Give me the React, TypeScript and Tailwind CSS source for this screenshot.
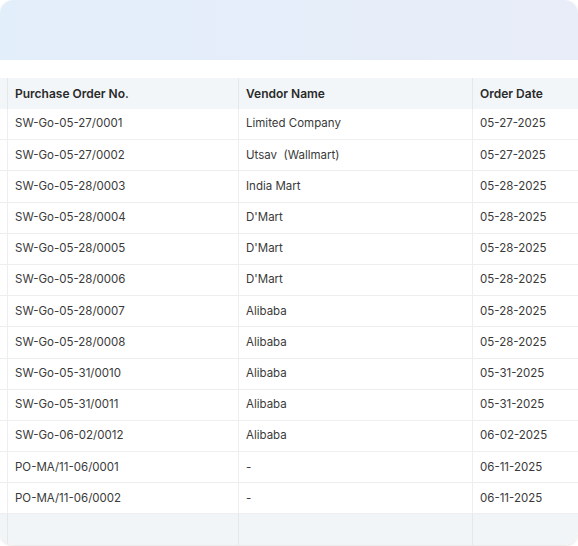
export default function App() {
  const rows: [string, string, string][] = [
    ["SW-Go-05-27/0001", "Limited Company", "05-27-2025"],
    ["SW-Go-05-27/0002", "Utsav  (Wallmart)", "05-27-2025"],
    ["SW-Go-05-28/0003", "India Mart", "05-28-2025"],
    ["SW-Go-05-28/0004", "D'Mart", "05-28-2025"],
    ["SW-Go-05-28/0005", "D'Mart", "05-28-2025"],
    ["SW-Go-05-28/0006", "D'Mart", "05-28-2025"],
    ["SW-Go-05-28/0007", "Alibaba", "05-28-2025"],
    ["SW-Go-05-28/0008", "Alibaba", "05-28-2025"],
    ["SW-Go-05-31/0010", "Alibaba", "05-31-2025"],
    ["SW-Go-05-31/0011", "Alibaba", "05-31-2025"],
    ["SW-Go-06-02/0012", "Alibaba", "06-02-2025"],
    ["PO-MA/11-06/0001", "-", "06-11-2025"],
    ["PO-MA/11-06/0002", "-", "06-11-2025"],
  ];
  const grid = "grid grid-cols-[8px_231px_234px_1fr]";
  return (
    <div className="w-[578px] h-[546px] bg-white" style={{ fontFamily: "Inter, 'Noto Sans', sans-serif" }}>
      <div className="w-[578px] h-[545px] rounded-[14px] overflow-hidden bg-white shadow-[0_1px_3px_rgba(0,0,0,0.12)]">
        <div className="h-[60px] bg-gradient-to-r from-[#e2eefa] to-[#e8edf9]" />
        <div className="h-[18px]" />
        <div className={`${grid} h-[31px] bg-[#f2f6f9] text-[12px] font-semibold text-[#2a2a2a]`}>
          <div className="border-r border-[#e5e8eb]" />
          <div className="border-r border-[#e5e8eb] flex items-center pl-[7px]">Purchase Order No.</div>
          <div className="border-r border-[#e5e8eb] flex items-center pl-[7px]">Vendor Name</div>
          <div className="flex items-center pl-[7px]">Order Date</div>
        </div>
        {rows.map((r, i) => (
          <div key={i} className={`${grid} h-[31.2px] text-[11.5px] text-[#3a3a3a] border-b border-[#eceef0]`}>
            <div className="border-r border-[#eceef0]" />
            <div className="border-r border-[#eceef0] flex items-center pl-[7px]">{r[0]}</div>
            <div className="border-r border-[#eceef0] flex items-center pl-[7px] whitespace-pre">{r[1]}</div>
            <div className="flex items-center pl-[7px]">{r[2]}</div>
          </div>
        ))}
        <div className={`${grid} h-[31px] bg-[#f2f5f8]`}>
          <div className="border-r border-[#e5e8eb]" />
          <div className="border-r border-[#e5e8eb]" />
          <div className="border-r border-[#e5e8eb]" />
          <div />
        </div>
      </div>
    </div>
  );
}
